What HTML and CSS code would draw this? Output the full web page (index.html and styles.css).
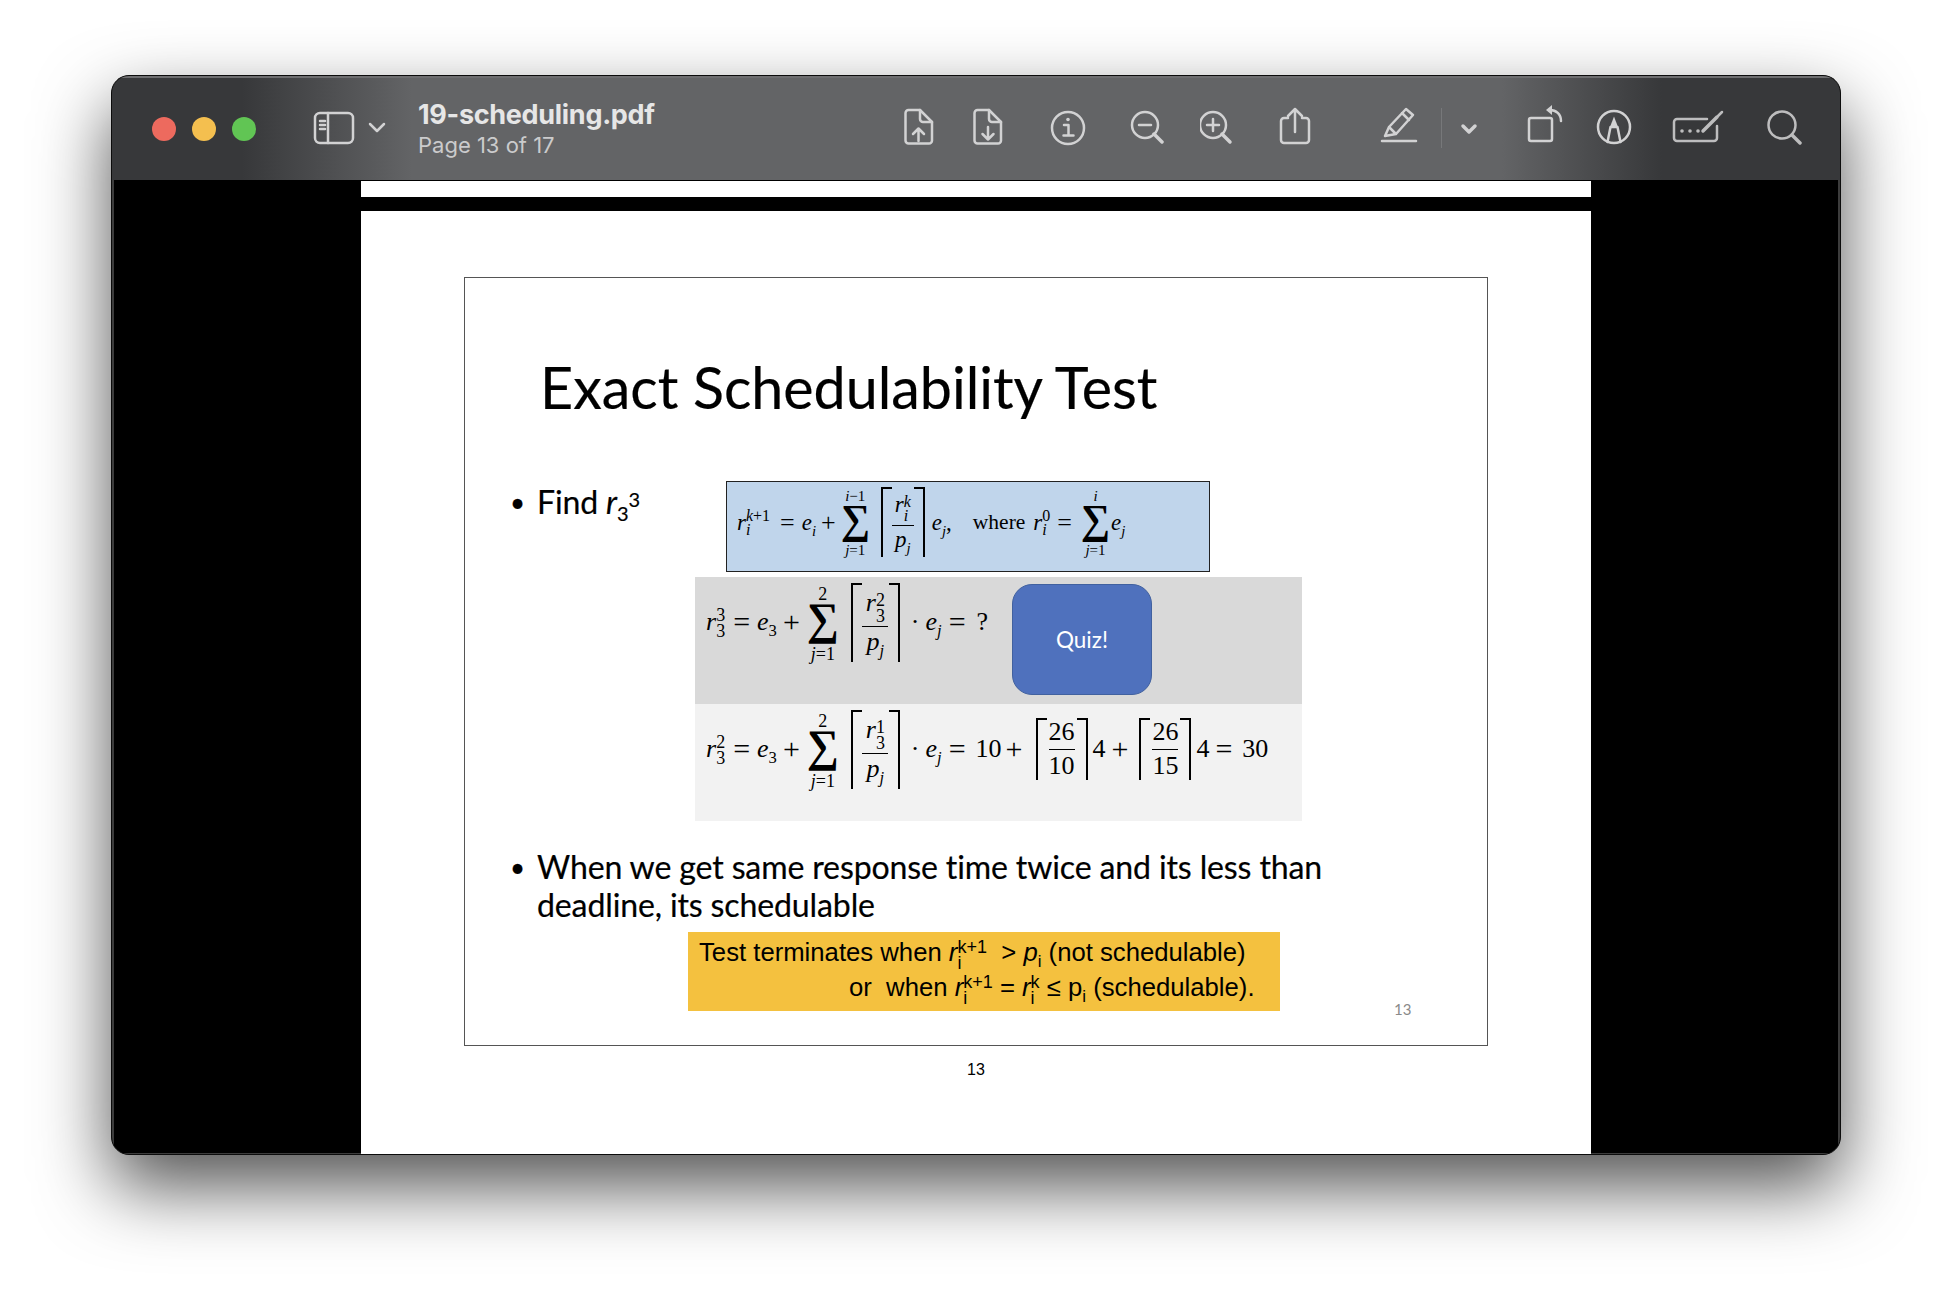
FILE: index.html
```html
<!DOCTYPE html>
<html lang="en">
<head>
    <meta charset="UTF-8">
    <title>19-scheduling.pdf</title>
    <link rel="stylesheet" href="styles.css">
</head>
<body>
    <div class="window">
        <header class="toolbar">
            <div class="lights">
                <span class="light red"></span>
                <span class="light yellow"></span>
                <span class="light green"></span>
            </div>
            <svg class="icon ic-sidebar" width="74" height="34" viewBox="313 111 74 34">
                <rect x="315" y="113" width="38" height="30" rx="5"/>
                <path d="M328 113V143M320 121H325M320 125H325M320 129H325"/>
                <path d="M370 124L377 131L384 124"/>
            </svg>
            <div class="doc-title">
                <div class="doc-name">19-scheduling.pdf</div>
                <div class="doc-page">Page 13 of 17</div>
            </div>
            <svg class="icon ic-upload" width="30" height="38" viewBox="904 108 30 38">
                <path d="M920 110H908.500A3 3 0 0 0 905.500 113V140.500A3 3 0 0 0 908.500 143.500H929A3 3 0 0 0 932 140.500V122Z"/>
                <path d="M920 110V119A3 3 0 0 0 923 122H932"/>
                <path d="M918.500 141V129M913 134L918.500 128.500L924 134"/>
            </svg>
            <svg class="icon ic-download" width="30" height="38" viewBox="973 108 30 38">
                <path d="M989 110H977.500A3 3 0 0 0 974.500 113V140.500A3 3 0 0 0 977.500 143.500H998A3 3 0 0 0 1001 140.500V122Z"/>
                <path d="M989 110V119A3 3 0 0 0 992 122H1001"/>
                <path d="M988 127V139.500M982.500 134L988 139.500L993.500 134"/>
            </svg>
            <svg class="icon ic-info" width="36" height="36" viewBox="1050 110 36 36">
                <circle cx="1068" cy="128" r="16"/>
                <path d="M1064 125H1068.500V135M1063.500 135.500H1073.500"/>
                <circle class="solid" cx="1068" cy="119.500" r="1.800"/>
            </svg>
            <svg class="icon ic-zoom-out" width="34" height="36" viewBox="1130 110 34 36">
                <circle cx="1145" cy="125" r="13"/>
                <path class="thick" d="M1154 134L1162 142"/>
                <path d="M1139 125H1151"/>
            </svg>
            <svg class="icon ic-zoom-in" width="34" height="36" viewBox="1200 110 34 36">
                <circle cx="1213" cy="125" r="13"/>
                <path class="thick" d="M1222 134L1230 142"/>
                <path d="M1207 125H1219M1213 119V131"/>
            </svg>
            <svg class="icon ic-share" width="32" height="40" viewBox="1279 106 32 40">
                <path d="M1288 118H1284A3 3 0 0 0 1281 121V140A3 3 0 0 0 1284 143H1306A3 3 0 0 0 1309 140V121A3 3 0 0 0 1306 118H1302"/>
                <path d="M1295 132V109M1288 116L1295 109L1302 116"/>
            </svg>
            <svg class="icon ic-highlight" width="38" height="40" viewBox="1380 105 38 40">
                <path d="M1406 109L1413 115L1396 134L1385 136L1389 127ZM1402 113L1409 120M1389 127L1396 134"/>
                <path d="M1382 141H1416"/>
            </svg>
            <div class="divider"></div>
            <svg class="icon ic-chevron" width="18" height="12" viewBox="1460 123 18 12">
                <path class="thick" d="M1463 126L1469 132L1475 126"/>
            </svg>
            <svg class="icon ic-rotate" width="38" height="40" viewBox="1526 104 38 40">
                <rect x="1529" y="118" width="23" height="23" rx="2"/>
                <path d="M1561 121C1561 114 1556 110 1550 110"/>
                <path class="solid" d="M1546 110L1552 105V115Z"/>
            </svg>
            <svg class="icon ic-markup" width="36" height="36" viewBox="1596 109 36 36">
                <circle cx="1614" cy="127" r="16"/>
                <path d="M1607.500 142L1610.500 127H1617.500L1620.500 142"/>
                <path class="solid" d="M1614 116.500L1618 127H1610Z"/>
            </svg>
            <svg class="icon dim ic-sign" width="52" height="34" viewBox="1672 110 52 34">
                <path d="M1707 119H1677A3 3 0 0 0 1674 122V138A3 3 0 0 0 1677 141H1714A3 3 0 0 0 1717 138V126"/>
                <path class="thick" d="M1703 131L1717 117"/>
                <path d="M1718 116L1722 112"/>
                <circle class="solid" cx="1682" cy="131" r="1.800"/>
                <circle class="solid" cx="1690" cy="131" r="1.800"/>
                <circle class="solid" cx="1698" cy="131" r="1.800"/>
            </svg>
            <svg class="icon dim ic-search" width="36" height="36" viewBox="1767 109 36 36">
                <circle cx="1782" cy="125" r="13.500"/>
                <path class="thick" d="M1792 135L1800 143"/>
            </svg>
        </header>

        <main class="viewer">
            <div class="prev-page"></div>
            <div class="page">
                <section class="slide">
                    <h1 class="slide-title">Exact Schedulability Test</h1>

                    <div class="find-row">
                        <div class="bullet find-text"><span class="dot">•</span><span>Find <i>r</i><sub>3</sub><sup>3</sup></span></div>
                        <div class="formula small box-blue">
                            <i>r</i><span class="scripts"><span><i>k</i>+1</span><span><i>i</i></span></span>
                            <span class="op m10">=</span>
                            <span class="m7"><i>e</i><sub><i>i</i></sub></span>
                            <span class="op m5">+</span>
                            <span class="sum m7"><span class="limit"><i>i</i>−1</span><span class="sigma">∑</span><span class="limit"><i>j</i>=1</span></span>
                            <span class="ceil m13"><span class="frac"><span class="num"><i>r</i><span class="scripts"><span><i>k</i></span><span><i>i</i></span></span></span><span class="den"><i>p</i><sub><i>j</i></sub></span></span></span>
                            <span class="m7"><i>e</i><sub><i>j</i></sub>,</span>
                            <span class="m21 where">where</span>
                            <span class="m8"><i>r</i></span><span class="scripts"><span>0</span><span><i>i</i></span></span>
                            <span class="op m7">=</span>
                            <span class="sum m11"><span class="limit"><i>i</i></span><span class="sigma">∑</span><span class="limit"><i>j</i>=1</span></span>
                            <span class="m3"><i>e</i><sub><i>j</i></sub></span>
                        </div>
                    </div>

                    <div class="box-grey">
                        <div class="formula question">
                            <i>r</i><span class="scripts"><span>3</span><span>3</span></span>
                            <span class="op m8">=</span>
                            <span class="m7"><i>e</i><sub>3</sub></span>
                            <span class="op m6">+</span>
                            <span class="sum m9"><span class="limit">2</span><span class="sigma">∑</span><span class="limit"><i>j</i>=1</span></span>
                            <span class="ceil m14"><span class="frac"><span class="num"><i>r</i><span class="scripts"><span>2</span><span>3</span></span></span><span class="den"><i>p</i><sub><i>j</i></sub></span></span></span>
                            <span class="m11">·</span>
                            <span class="m6"><i>e</i><sub><i>j</i></sub></span>
                            <span class="op m7">=</span>
                            <span class="m11">?</span>
                        </div>
                        <div class="quiz">Quiz!</div>
                    </div>

                    <div class="box-light">
                        <div class="formula">
                            <i>r</i><span class="scripts"><span>2</span><span>3</span></span>
                            <span class="op m8">=</span>
                            <span class="m7"><i>e</i><sub>3</sub></span>
                            <span class="op m6">+</span>
                            <span class="sum m9"><span class="limit">2</span><span class="sigma">∑</span><span class="limit"><i>j</i>=1</span></span>
                            <span class="ceil m14"><span class="frac"><span class="num"><i>r</i><span class="scripts"><span>1</span><span>3</span></span></span><span class="den"><i>p</i><sub><i>j</i></sub></span></span></span>
                            <span class="m11">·</span>
                            <span class="m6"><i>e</i><sub><i>j</i></sub></span>
                            <span class="op m7">=</span>
                            <span class="m10">10</span>
                            <span class="op m4">+</span>
                            <span class="ceil short m13"><span class="frac"><span class="num">26</span><span class="den">10</span></span></span>
                            <span class="m5">4</span>
                            <span class="op m6">+</span>
                            <span class="ceil short m11"><span class="frac"><span class="num">26</span><span class="den">15</span></span></span>
                            <span class="m5">4</span>
                            <span class="op m6">=</span>
                            <span class="m10">30</span>
                        </div>
                    </div>

                    <div class="bullet when-text"><span class="dot">•</span><span>When we get same response time twice and its less than deadline, its schedulable</span></div>

                    <div class="foot-row">
                        <div class="box-orange">
                            <div class="first"><span>Test terminates when <i>r</i></span><span class="scripts inline"><span>k+1</span><span>i</span></span><span>&nbsp; &gt; <i>p</i><sub>i</sub> (not schedulable)</span></div>
                            <div class="second"><span>or&nbsp; when <i>r</i></span><span class="scripts inline"><span>k+1</span><span>i</span></span><span> = <i>r</i></span><span class="scripts inline"><span>k</span><span>i</span></span><span> ≤ p<sub>i</sub> (schedulable).</span></div>
                        </div>
                        <div class="slide-num">13</div>
                    </div>
                </section>
                <div class="page-num">13</div>
            </div>
        </main>
    </div>
</body>
</html>
```
FILE: styles.css
```css
html,
body {
    margin: 0;
    padding: 0;
    height: 1302px;
    overflow: hidden;
    background: #fff;
}

.window {
    box-sizing: border-box;
    width: 1730px;
    height: 1080px;
    margin: 75px 0 0 111px;
    border: 1px solid #0c0c0c;
    border-radius: 18px;
    overflow: hidden;
    background: #000;
    box-shadow: 0 32px 72px rgba(0, 0, 0, 0.68);
}

/* toolbar */
.toolbar {
    box-sizing: border-box;
    display: flex;
    align-items: flex-start;
    height: 104px;
    padding-top: 30px;
    border-top: 2px solid #6e6e70;
    background: linear-gradient(90deg, #37383a 0, #37383a 130px, #636466 300px, #636466 1390px, #37383a 1550px);
}

.lights {
    display: flex;
    gap: 16px;
    margin: 9px 0 0 40px;
}

.light {
    width: 24px;
    height: 24px;
    border-radius: 50%;
}

.red { background: #ed6a5e; }
.yellow { background: #f4bf4f; }
.green { background: #61c554; }

.icon {
    display: block;
    flex: none;
    fill: none;
    stroke: #d2d2d3;
    stroke-width: 2.5;
    stroke-linecap: round;
    stroke-linejoin: round;
}

.icon.dim { stroke: #bdbdbe; }
.icon .thick { stroke-width: 3.5; }
.icon .solid { fill: #d2d2d3; stroke: none; }
.icon.dim .solid { fill: #bdbdbe; }

.ic-sidebar { margin: 3px 0 0 57px; }
.ic-upload { margin: 0 0 0 486px; }
.ic-download { margin: 0 0 0 39px; }
.ic-info { margin: 2px 0 0 47px; }
.ic-zoom-out { margin: 2px 0 0 44px; }
.ic-zoom-in { margin: 2px 0 0 36px; }
.ic-share { margin: -2px 0 0 45px; }
.ic-highlight { margin: -3px 0 0 69px; }
.ic-chevron { margin: 15px 0 0 18px; }
.ic-rotate { margin: -4px 0 0 48px; }
.ic-markup { margin: 1px 0 0 32px; }
.ic-sign { margin: 2px 0 0 40px; }
.ic-search { margin: 1px 0 0 43px; }

.divider {
    flex: none;
    width: 1px;
    height: 40px;
    margin: 0 0 0 23px;
    background: #77787a;
}

.doc-title {
    width: 0;
    margin: -9px 0 0 31px;
    white-space: nowrap;
    font-family: Inter, sans-serif;
}

.doc-name {
    font-size: 27px;
    line-height: 32px;
    font-weight: 700;
    letter-spacing: -0.3px;
    color: #e6e6e6;
}

.doc-page {
    margin-top: 1px;
    font-size: 22px;
    line-height: 26px;
    color: #cbcbcc;
}

/* pdf area */
.viewer {
    box-sizing: border-box;
    height: 975px;
    padding: 1px 247px 0;
    border: solid #3c3c3c;
    border-width: 0 2px 2px;
}

.prev-page {
    height: 16px;
    background: #fff;
}

.page {
    box-sizing: border-box;
    height: 945px;
    margin: 14px 0 -2px;
    padding-top: 66px;
    background: #fff;
    color: #000;
}

.slide {
    box-sizing: border-box;
    width: 1024px;
    height: 769px;
    margin: 0 auto;
    border: 1px solid #555;
    font-family: Lato, sans-serif;
    -webkit-text-stroke: 0.2px #000;
}

.slide-title {
    box-sizing: border-box;
    height: 203px;
    margin: 0;
    padding: 76px 0 0 75px;
    font-size: 57.400px;
    line-height: 66px;
    font-weight: 400;
}

.bullet {
    display: flex;
    font-size: 32.100px;
    line-height: 38px;
    letter-spacing: -0.15px;
}

.dot {
    flex: none;
    width: 26px;
    margin-left: 45px;
    margin-right: 1px;
    font-size: 26px;
}

.bullet sub,
.bullet sup {
    font-size: 20px;
    line-height: 0;
}

.bullet sup {
    vertical-align: 7px;
}

.find-row {
    display: flex;
    height: 91px;
}

.find-text {
    box-sizing: border-box;
    width: 261px;
    padding-top: 2px;
}

/* formulas */
.formula {
    display: flex;
    align-items: center;
    height: 80px;
    padding-left: 11px;
    font-family: "Liberation Serif", serif;
    font-size: 26px;
    line-height: 26px;
    white-space: nowrap;
    -webkit-text-stroke: 0;
}

.formula sub {
    font-size: 0.64em;
    line-height: 0;
}

.op {
    font-size: 30px;
}

.scripts {
    display: inline-flex;
    flex-direction: column;
    margin-top: 2px;
    font-size: 18px;
    line-height: 16px;
}

.sum {
    display: flex;
    flex-direction: column;
    align-items: center;
    width: 28px;
}

.limit {
    margin: 2px 0 -2px;
    font-size: 18px;
    line-height: 16px;
    white-space: nowrap;
}

.sigma {
    margin: -3px 0 3px;
    font-size: 45px;
    line-height: 44px;
    font-weight: 700;
}

.ceil {
    box-sizing: border-box;
    display: flex;
    justify-content: center;
    align-items: center;
    width: 49px;
    height: 79px;
    border: solid #000;
    border-width: 0 2px;
    background:
        linear-gradient(#000, #000) left top / 9px 2px no-repeat,
        linear-gradient(#000, #000) right top / 9px 2px no-repeat;
}

.ceil.short {
    width: 52px;
    height: 62px;
}

.frac {
    display: flex;
    flex-direction: column;
    align-items: center;
    width: 26px;
}

.num {
    display: flex;
    justify-content: center;
    width: 100%;
    padding-bottom: 2px;
    border-bottom: 1px solid #000;
    white-space: nowrap;
}

.den {
    padding-top: 2px;
    text-align: center;
}

.short .num { padding-bottom: 4px; }
.short .den { padding-top: 3px; }

.m3 { margin-left: 3px; }
.m4 { margin-left: 4px; }
.m5 { margin-left: 5px; }
.m6 { margin-left: 6px; }
.m7 { margin-left: 7px; }
.m8 { margin-left: 8px; }
.m9 { margin-left: 9px; }
.m10 { margin-left: 10px; }
.m11 { margin-left: 11px; }
.m13 { margin-left: 13px; }
.m14 { margin-left: 14px; }
.m21 { margin-left: 21px; }

/* small formula in the blue box */
.formula.small {
    box-sizing: border-box;
    width: 484px;
    height: 91px;
    padding: 0 0 9px 10px;
    border: 1px solid #222;
    background: #c0d5eb;
    font-size: 23px;
    line-height: 23px;
}

.small .op { font-size: 26px; }
.small .scripts { font-size: 16px; line-height: 14px; }
.small .limit { margin: 1px 0 -1px; font-size: 15px; line-height: 14px; }
.small .sigma { font-size: 41px; line-height: 40px; }
.small .sum { width: 25px; }
.small .ceil { width: 44px; height: 70px; }
.small .frac { width: 22px; }
.small .where { font-size: 21.500px; }

.box-grey,
.box-light {
    width: 607px;
    margin-left: 230px;
}

.box-grey {
    box-sizing: border-box;
    display: flex;
    height: 127px;
    margin-top: 5px;
    padding-top: 5px;
    background: #d9d9d9;
}

.question {
    box-sizing: border-box;
    flex: none;
    width: 317px;
}

.quiz {
    box-sizing: border-box;
    display: flex;
    justify-content: center;
    align-items: center;
    width: 140px;
    height: 111px;
    margin-top: 2px;
    border: 1px solid #41619f;
    border-radius: 20px;
    background: #4f71bd;
    color: #fff;
    -webkit-text-stroke: 0;
    font-size: 22.500px;
}

.box-light {
    box-sizing: border-box;
    height: 117px;
    padding-top: 5px;
    background: #f2f2f2;
}

.when-text {
    width: 900px;
    margin-top: 27px;
}

.foot-row {
    display: flex;
    margin-top: 8px;
}

.box-orange {
    box-sizing: border-box;
    width: 592px;
    height: 79px;
    margin-left: 223px;
    padding: 3px 0 0 11px;
    background: #f4c13f;
    font-family: "Liberation Sans", sans-serif;
    font-size: 25.700px;
    line-height: 35px;
    white-space: nowrap;
    -webkit-text-stroke: 0;
}

.box-orange sub {
    font-size: 17px;
    line-height: 0;
}

.first,
.second {
    height: 35px;
}

.scripts.inline {
    vertical-align: 8px;
    margin-top: 0;
    font-size: 18px;
    line-height: 16px;
}

.second {
    padding-left: 150px;
}

.slide-num {
    align-self: flex-end;
    margin: 0 0 -9px 114px;
    font-family: Lato, sans-serif;
    font-size: 15px;
    line-height: 22px;
    color: #8a8a8a;
    -webkit-text-stroke: 0;
}

.page-num {
    margin-top: 15px;
    text-align: center;
    font-family: "Liberation Sans", sans-serif;
    font-size: 16px;
    line-height: 18px;
}
```
